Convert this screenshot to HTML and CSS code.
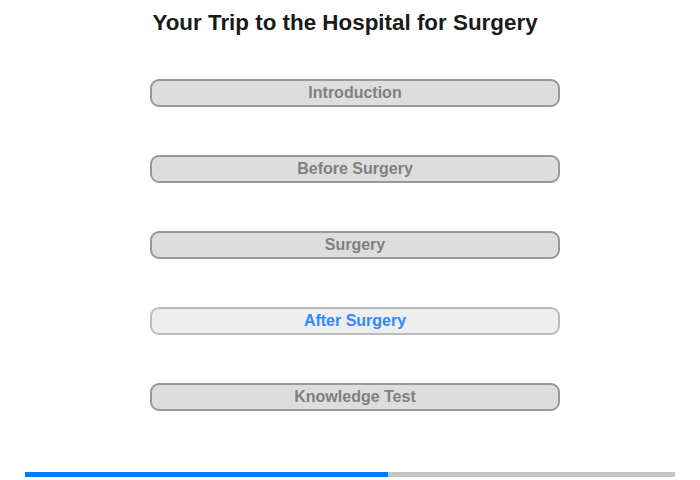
FILE: index.html
```html
<!DOCTYPE html>
<html lang="en">
<head>
  <meta charset="UTF-8" />
  <title>Your Trip to the Hospital for Surgery</title>
  <link rel="stylesheet" href="styles.css">
</head>
<body>

  <h1 class="title">Your Trip to the Hospital for Surgery</h1>

  <!-- chapter menu -->
  <div class="menu">
    <button class="chapter">Introduction</button>
    <button class="chapter">Before Surgery</button>
    <button class="chapter">Surgery</button>
    <button class="chapter current">After Surgery</button>
    <button class="chapter">Knowledge Test</button>
  </div>

  <div class="progress">
    <div class="progress-done" style="width: 55.8%"></div>
  </div>

</body>
</html>
```

FILE: styles.css
```css
body {
  font-family: 'Liberation Sans', Arial, sans-serif;
  margin: 0;
  background: #ffffff;
  color: #222222;
}

.title {
  width: 690px;
  margin: 0;
  padding-top: 11px;
  font-size: 22.4px;
  line-height: 24px;
  text-align: center;
  color: #1a1a1a;
}

.menu {
  display: flex;
  flex-direction: column;
  gap: 48px;
  padding-top: 44px;
  padding-left: 150px;
}

.chapter {
  width: 410px;
  height: 28px;
  padding: 0;
  font-family: inherit;
  font-size: 16px;
  font-weight: bold;
  color: #808080;
  background: #dddddd;
  border: 2px solid #999999;
  border-radius: 9px;
  cursor: pointer;
}

.chapter.current {
  color: #3388ff;
  background: #eeeeee;
  border-color: #bbbbbb;
}

.progress {
  display: flex;
  width: 650px;
  height: 5px;
  margin: 61px 0 0 25px;
  background: #c4c4c4;
}

.progress-done {
  height: 100%;
  background: #007bff;
}
```
